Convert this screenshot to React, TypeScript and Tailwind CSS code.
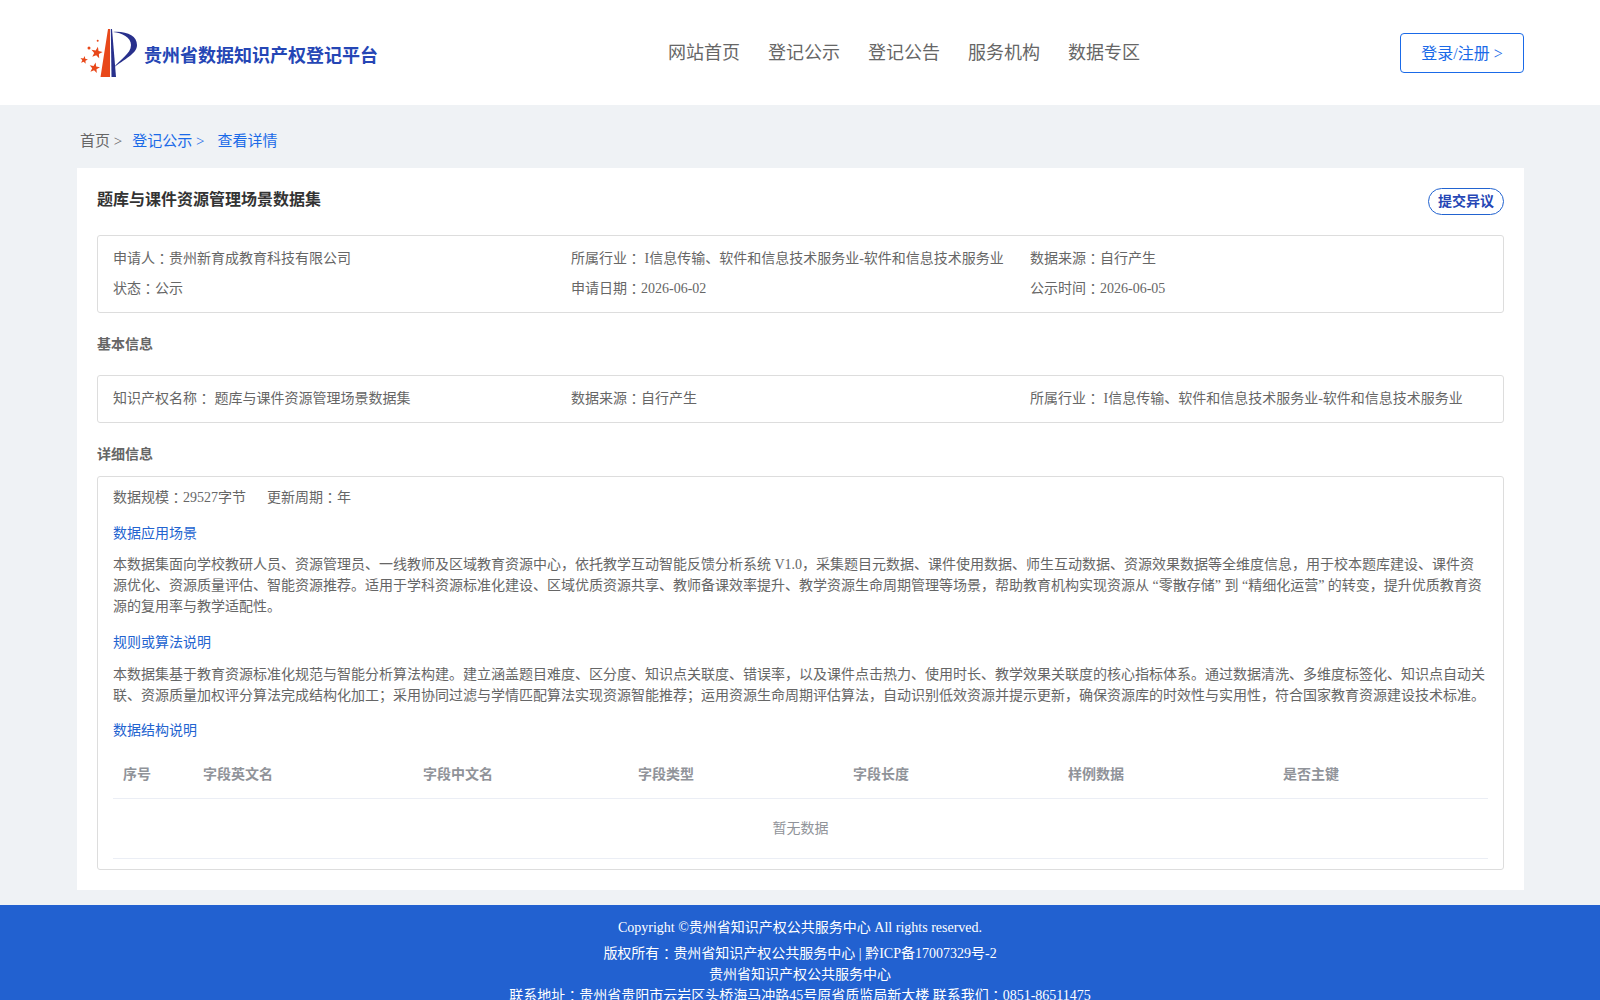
const Star = ({ cx, cy, r }: { cx: number; cy: number; r: number }) => {
  // five point star
  const pts = Array.from({ length: 10 }, (_, i) => {
    const a = (Math.PI / 5) * i - Math.PI / 2 + 0.2;
    const d = i % 2 === 0 ? r : r * 0.42;
    return `${cx + d * Math.cos(a)},${cy + d * Math.sin(a)}`;
  }).join(" ");
  return <polygon points={pts} fill="#e8481a" />;
};

const Logo = () => (
  <svg width="60" height="54" viewBox="80 26 60 54" className="shrink-0">
    <path d="M100.500 77 L108 29 L110 29 L110 77 Z" fill="#e8481a" />
    <path d="M110.800 29 L112 29 L116 77 L111.500 77 Z" fill="#28308c" />
    <path d="M113 32 C127 31 137 36 137 45 C137 54 124 59 113.500 68 C120 59 131 54 131 45 C131 37 122 33 113 32 Z" fill="#28308c" />
    <Star cx={96.700} cy={52.700} r={6} />
    <Star cx={94.500} cy={68} r={5.500} />
    <Star cx={84} cy={60} r={4} />
    <circle cx="89" cy="48" r="1.500" fill="#e8481a" />
    <circle cx="97.700" cy="40.700" r="1" fill="#e8481a" />
  </svg>
);

// the reference sets colons centred in their cell
const C = () => <span className="font-['Noto_Sans_CJK_TC'] leading-none align-[-1px]">：</span>;

const navs = ["网站首页", "登记公示", "登记公告", "服务机构", "数据专区"];
const cols = ["序号", "字段英文名", "字段中文名", "字段类型", "字段长度", "样例数据", "是否主键"];
const colWidths = ["w-[80px]", "w-[220px]", "w-[215px]", "w-[215px]", "w-[215px]", "w-[215px]", "flex-1"];

const App = () => {
  return (
    <div className="min-h-screen bg-[#eff2f5] font-['Liberation_Serif','Noto_Sans_CJK_SC',serif] text-sm text-[#666]">
      {/* 顶部导航 */}
      <header className="h-[105px] bg-white flex items-start px-[80px]">
        <div className="w-[500px] flex items-center pt-[26px]">
          <Logo />
          <span className="ml-[4px] mt-[5px] text-lg font-bold text-[#2546b5]">贵州省数据知识产权登记平台</span>
        </div>
        <nav className="ml-[88px] pt-[40px] flex gap-[28px] text-lg leading-[26px] text-[#666]">
          {navs.map((n) => (
            <span key={n}>{n}</span>
          ))}
        </nav>
        <button className="ml-auto mr-[-4px] mt-[33px] w-[124px] h-[40px] pt-[1px] rounded border border-[#1a6ae8] text-base text-[#1a6ae8]">
          登录/注册 &gt;
        </button>
      </header>

      <main className="pl-[77px] pr-[76px] pb-[15px]">
        <div className="h-[63px] flex items-center pl-[3px] pt-[10px] text-[15px]">
          <span>首页 &gt;</span>
          <span className="ml-[10px] text-[#1a6ae8]">登记公示 &gt;</span>
          <span className="ml-[13px] text-[#1a6ae8]">查看详情</span>
        </div>

        <div className="bg-white px-[20px] pt-[20px] pb-[20px]">
          <div className="flex justify-between items-start h-[47px]">
            <h1 className="text-base font-bold leading-[24px] text-[#333]">题库与课件资源管理场景数据集</h1>
            <button className="h-[27px] w-[76px] rounded-[14px] border border-[#2263d0] font-bold text-[#2546b5]">提交异议</button>
          </div>

          {/* 概要 */}
          <div className="border border-[#ddd] rounded-[3px] px-[15px] pt-[8px] pb-[8px] grid grid-cols-[458px_459px_1fr] leading-[30px]">
            <div>申请人<C />贵州新育成教育科技有限公司</div>
            <div>所属行业<C /> I信息传输、软件和信息技术服务业-软件和信息技术服务业</div>
            <div>数据来源<C />自行产生</div>
            <div>状态<C />公示</div>
            <div>申请日期<C />2026-06-02</div>
            <div>公示时间<C />2026-06-05</div>
          </div>

          <h2 className="mt-[21px] mb-[19px] font-bold leading-[22px]">基本信息</h2>
          <div className="border border-[#ddd] rounded-[3px] px-[15px] py-[8px] grid grid-cols-[458px_459px_1fr] leading-[30px]">
            <div>知识产权名称<C /> 题库与课件资源管理场景数据集</div>
            <div>数据来源<C />自行产生</div>
            <div>所属行业<C /> I信息传输、软件和信息技术服务业-软件和信息技术服务业</div>
          </div>

          <h2 className="mt-[21px] mb-[10px] font-bold leading-[22px]">详细信息</h2>
          <div className="border border-[#ddd] rounded-[3px] px-[15px] pt-[10px] pb-[10px]">
            <div className="leading-[22px]">
              数据规模<C />29527字节<span className="ml-[21px]">更新周期<C />年</span>
            </div>
            <div className="mt-[14px] leading-[22px] text-[#2263d0]">数据应用场景</div>
            <p className="mt-[9px] leading-[21px]">
              本数据集面向学校教研人员、资源管理员、一线教师及区域教育资源中心，依托教学互动智能反馈分析系统 V1.0，采集题目元数据、课件使用数据、师生互动数据、资源效果数据等全维度信息，用于校本题库建设、课件资源优化、资源质量评估、智能资源推荐。适用于学科资源标准化建设、区域优质资源共享、教师备课效率提升、教学资源生命周期管理等场景，帮助教育机构实现资源从 “零散存储” 到 “精细化运营” 的转变，提升优质教育资源的复用率与教学适配性。
            </p>
            <div className="mt-[15px] leading-[22px] text-[#2263d0]">规则或算法说明</div>
            <p className="mt-[10px] leading-[21px]">
              本数据集基于教育资源标准化规范与智能分析算法构建。建立涵盖题目难度、区分度、知识点关联度、错误率，以及课件点击热力、使用时长、教学效果关联度的核心指标体系。通过数据清洗、多维度标签化、知识点自动关联、资源质量加权评分算法完成结构化加工；采用协同过滤与学情匹配算法实现资源智能推荐；运用资源生命周期评估算法，自动识别低效资源并提示更新，确保资源库的时效性与实用性，符合国家教育资源建设技术标准。
            </p>
            <div className="mt-[14px] leading-[22px] text-[#2263d0]">数据结构说明</div>

            <div className="mt-[9px] h-[48px] flex items-center border-b border-[#ebeef5] font-bold text-[#909399]">
              {cols.map((c, i) => (
                <div key={c} className={`${colWidths[i]} pl-[10px]`}>{c}</div>
              ))}
            </div>
            <div className="h-[60px] flex items-center justify-center border-b border-[#ebeef5] text-[#909399]">暂无数据</div>
          </div>
        </div>
      </main>

      <footer className="bg-[#2261d0] text-white text-center pt-[12px] pb-[12px]">
        <div className="leading-[21px]">Copyright ©贵州省知识产权公共服务中心 All rights reserved.</div>
        <div className="mt-[5px] leading-[21px]">版权所有<C />贵州省知识产权公共服务中心 | 黔ICP备17007329号-2</div>
        <div className="leading-[21px]">贵州省知识产权公共服务中心</div>
        <div className="leading-[21px]">联系地址<C />贵州省贵阳市云岩区头桥海马冲路45号原省质监局新大楼 联系我们<C />0851-86511475</div>
      </footer>
    </div>
  );
};

export default App;
